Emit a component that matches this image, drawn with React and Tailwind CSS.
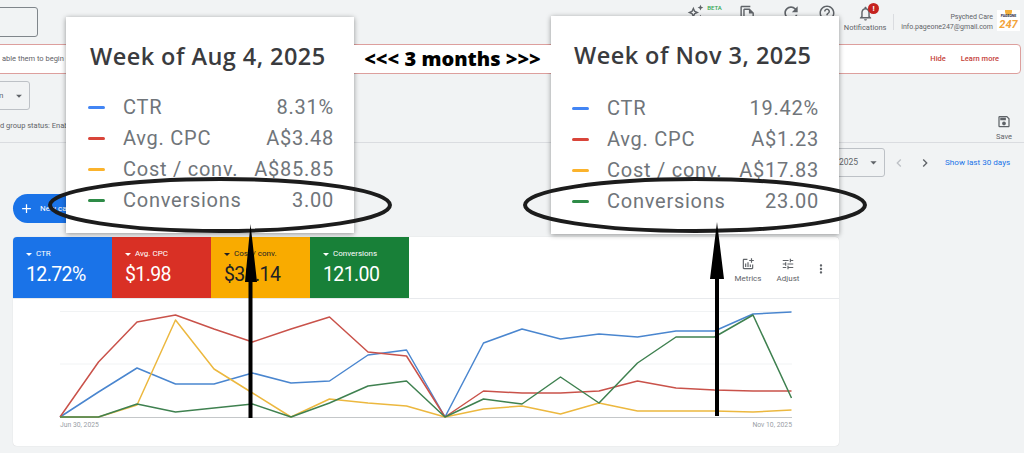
import React from "react";
import { MdAdd, MdArrowDropDown, MdChevronLeft, MdChevronRight, MdMoreVert, MdOutlineAddchart, MdOutlineAutoAwesome, MdOutlineFileCopy, MdOutlineHelpOutline, MdOutlineNotifications, MdOutlineSave, MdRefresh, MdTune } from "react-icons/md";

const xs = Array.from({ length: 20 }, (_, i) => 60 + i * 38.5);
const toPts = (ys) => ys.map((y, i) => `${xs[i]},${y}`).join(" ");
const series = [
  ["#4a86cf", [417, 392, 368, 384, 384, 373, 383, 381, 355, 350, 417, 343, 329, 339, 334, 337, 331, 331, 314, 312]],
  ["#c9524a", [417, 362, 322, 315, 329, 342, 329, 317, 352, 356, 417, 391, 393, 393, 391, 381, 388, 390, 391, 391]],
  ["#ecb83f", [417, 417, 405, 320, 369, 393, 417, 399, 403, 406, 417, 409, 406, 414, 403, 411, 411, 411, 412, 410]],
  ["#3f8150", [417, 417, 404, 412, 408, 404, 417, 403, 386, 381, 417, 399, 404, 377, 403, 363, 337, 337, 315, 398]],
];

const tabs = [
  ["CTR", "12.72%", "bg-[#1a73e8] text-white"],
  ["Avg. CPC", "$1.98", "bg-[#d93025] text-white"],
  ["Cost / conv.", "$38.14", "bg-[#f9ab00] text-[#202124]"],
  ["Conversions", "121.00", "bg-[#188038] text-white"],
];

function Popup({ title, rows, className, listClass }) {
  return (
    <div className={`absolute w-[288px] bg-white pr-[20px] pt-[23px] shadow-[0_1px_5px_rgba(0,0,0,0.4)] ${className}`}>
      <div className="h-[33px] pl-[2px] text-[23.5px] leading-[33px] font-semibold tracking-[0.45px] text-[#3a3b3e] whitespace-nowrap font-['Open_Sans',sans-serif]">{title}</div>
      <div className={`flex flex-col ${listClass}`}>
        {rows.map(([label, value, color]) => (
          <div key={label} className="flex h-[31px] items-center text-[20px] leading-[31px] text-[#70757a] tracking-[0.75px]">
            <span className={`h-[3px] w-[17px] rounded-full ${color}`} />
            <span className="ml-[18px]">{label}</span>
            <span className="ml-auto">{value}</span>
          </div>
        ))}
      </div>
    </div>
  );
}

export default function App() {
  return (
    <div className="relative h-[453px] w-[1024px] overflow-hidden bg-[#f1f3f4] font-['Roboto',sans-serif] text-[#5f6368]">
      {/* Header */}
      <header className="flex h-[44px]">
        <div className="-ml-[10px] mt-[7px] h-[30px] w-[48px] rounded-[3px] border border-[#80868b]" />
        <div className="ml-auto flex items-start pr-[4px]">
          <div className="relative mt-[4px] mr-[35px] text-[17px]"><MdOutlineAutoAwesome className="text-[#5f6368]" /><span className="absolute -top-[1px] left-[20px] text-[6px] font-medium text-[#34a853]">BETA</span></div>
          <MdOutlineFileCopy className="mt-[5px] mr-[25px] text-[17px]" />
          <MdRefresh className="mt-[3px] mr-[17px] text-[20px]" />
          <MdOutlineHelpOutline className="mt-[4px] mr-[7px] text-[18px]" />
          <div className="relative mr-[6px] flex w-[44px] flex-col items-center pt-[5px]">
            <MdOutlineNotifications className="text-[17px]" />
            <span className="absolute left-[25px] top-[3px] flex h-[11px] w-[11px] items-center justify-center rounded-full bg-[#c5221f] text-[8px] font-bold text-white">!</span>
            <span className="mt-px text-[7.5px] leading-[10px] whitespace-nowrap">Notifications</span>
          </div>
          <div className="mt-[14px] h-[16px] w-px bg-[#dadce0]" />
          <div className="ml-[7px] mt-[12px] flex flex-col items-end text-[7px] leading-[10px]">
            <span>Psyched Care</span>
            <span>info.pageone247@gmail.com</span>
          </div>
          <div className="ml-[4px] mt-[10px] flex h-[21px] w-[23px] flex-col items-center bg-white leading-none">
            <span className="h-[5px] w-[7px] rounded-b-full bg-[#f4b03a]" />
            <span className="text-[3.5px] font-bold text-[#1f2a44]">PAGEONE</span>
            <span className="text-[11px] font-bold italic text-[#f2a33a]">247</span>
          </div>
        </div>
      </header>

      {/* Banner */}
      <div className="-ml-[8px] mr-[3px] flex h-[30px] items-center rounded-[4px] border border-[#dd9f9d] bg-white pl-[9px] pr-[21px] text-[7.5px]">
        <span>able them to begin showing</span>
        <span className="ml-auto font-medium text-[#c5423a]">Hide</span>
        <span className="ml-[15px] font-medium text-[#c5423a]">Learn more</span>
      </div>

      {/* Toolbar */}
      <div className="flex h-[69px] justify-between border-b border-[#dadce0]">
        <div>
          <div className="-ml-[10px] mt-[7px] flex h-[29px] w-[40px] items-center rounded-[3px] border border-[#bdc1c6] pl-[8px] text-[8px]">
            <span>n</span>
            <MdArrowDropDown className="ml-auto mr-[3px] text-[14px]" />
          </div>
          <div className="mt-[11px] text-[7.5px] leading-[10px]">d group status: Enabled</div>
        </div>
        <div className="mr-[12px] mt-[40px] flex flex-col items-center text-[7.5px] leading-[10px]">
          <MdOutlineSave className="text-[16px]" />
          <span className="mt-[3px]">Save</span>
        </div>
      </div>

      {/* Date controls */}
      <div className="flex h-[40px] items-start justify-end pr-[14px] pt-[5px]">
        <div className="flex h-[29px] w-[60px] items-center justify-end rounded-[3px] border border-[#bdc1c6] pr-[3px] text-[8.5px]">
          <span>2025</span>
          <MdArrowDropDown className="ml-[8px] text-[15px]" />
        </div>
        <div className="ml-[6px] flex h-[29px] items-center text-[16px]">
          <MdChevronLeft className="text-[#bdc1c6]" />
          <MdChevronRight className="ml-[10px]" />
        </div>
        <span className="ml-[12px] flex h-[29px] w-[65px] items-center whitespace-nowrap text-[8.1px] text-[#1a73e8]">Show last 30 days</span>
      </div>

      {/* New campaign */}
      <button className="ml-[13px] mt-[11px] flex h-[29px] w-[120px] items-center rounded-full bg-[#1a73e8] pl-[6px] text-[8px] text-white">
        <MdAdd className="text-[15px]" />
        <span className="ml-[6px]">New campaign</span>
      </button>

      {/* Chart card */}
      <section className="ml-[13px] mt-[14px] h-[209px] w-[826px] overflow-hidden rounded-[4px] bg-white shadow-[0_0_1px_rgba(0,0,0,0.2)]">
        <div className="flex h-[62px] border-b border-[#e8eaed]">
          {tabs.map(([label, value, color]) => (
            <div key={label} className={`flex h-[61px] w-[99px] flex-col pl-[13px] pt-[11px] ${color}`}>
              <div className="flex h-[12px] items-center text-[8px]">
                <span className="mr-[4px] h-0 w-0 border-x-[3px] border-t-[3px] border-x-transparent border-t-current" />
                {label}
              </div>
              <div className="mt-[4px] text-[19.5px] leading-[22px] tracking-[-0.6px]">{value}</div>
            </div>
          ))}
          <div className="ml-auto flex items-center pr-[11px] pt-[5px] text-[#5f6368]">
            <div className="flex w-[32px] flex-col items-center text-[8px] leading-[10px]"><MdOutlineAddchart className="mb-[3px] text-[14px]" />Metrics</div>
            <div className="ml-[8px] flex w-[32px] flex-col items-center text-[8px] leading-[10px]"><MdTune className="mb-[3px] text-[14px]" />Adjust</div>
            <MdMoreVert className="-mt-[3px] ml-[10px] text-[14px]" />
          </div>
        </div>
        <svg viewBox="13 299 826 120" className="block h-[120px] w-[826px]" fill="none">
          <path d="M60 311.5H792M60 364H792" stroke="#f1f3f4" strokeWidth="1" />
          <path d="M60 417.5H792" stroke="#c4c7c9" strokeWidth="1" />
          {series.map(([c, ys]) => (
            <polyline key={c} points={toPts(ys)} stroke={c} strokeWidth="1.5" strokeLinejoin="round" />
          ))}
        </svg>
        <div className="flex justify-between px-[47px] pt-[1px] text-[6.8px] leading-[10px] text-[#9aa0a6]">
          <span>Jun 30, 2025</span>
          <span>Nov 10, 2025</span>
        </div>
      </section>

      {/* Annotation overlays */}
      <Popup
        className="left-[66px] top-[17px] h-[216px] pl-[22px]"
        listClass="mt-[19px]"
        title="Week of Aug 4, 2025"
        rows={[
          ["CTR", "8.31%", "bg-[#4285f4]"],
          ["Avg. CPC", "A$3.48", "bg-[#d9453a]"],
          ["Cost / conv.", "A$85.85", "bg-[#fbb32c]"],
          ["Conversions", "3.00", "bg-[#2e8b47]"],
        ]}
      />
      <Popup
        className="left-[551px] top-[16px] h-[218px] pl-[21px]"
        listClass="mt-[21px]"
        title="Week of Nov 3, 2025"
        rows={[
          ["CTR", "19.42%", "bg-[#4285f4]"],
          ["Avg. CPC", "A$1.23", "bg-[#d9453a]"],
          ["Cost / conv.", "A$17.83", "bg-[#fbb32c]"],
          ["Conversions", "23.00", "bg-[#2e8b47]"],
        ]}
      />
      <div className="absolute left-[354px] top-[45px] flex h-[28px] w-[197px] items-center justify-center bg-white text-[20px] font-extrabold text-black font-['Open_Sans',sans-serif] whitespace-nowrap">
        {"<<< 3 months >>>"}
      </div>
      <svg className="pointer-events-none absolute left-0 top-0 h-[453px] w-[1024px]" viewBox="0 0 1024 453" fill="none">
        <ellipse cx="220" cy="205" rx="170" ry="26" stroke="#1c1c1c" strokeWidth="4" />
        <ellipse cx="695" cy="205" rx="170" ry="26" stroke="#1c1c1c" strokeWidth="4" />
        <path d="M248.5 282H245L250.5 224L257 282H252.5V418H248.5Z" fill="#000" />
        <path d="M715 279H710L717 222L724 279H719V416H715Z" fill="#000" />
      </svg>
    </div>
  );
}
